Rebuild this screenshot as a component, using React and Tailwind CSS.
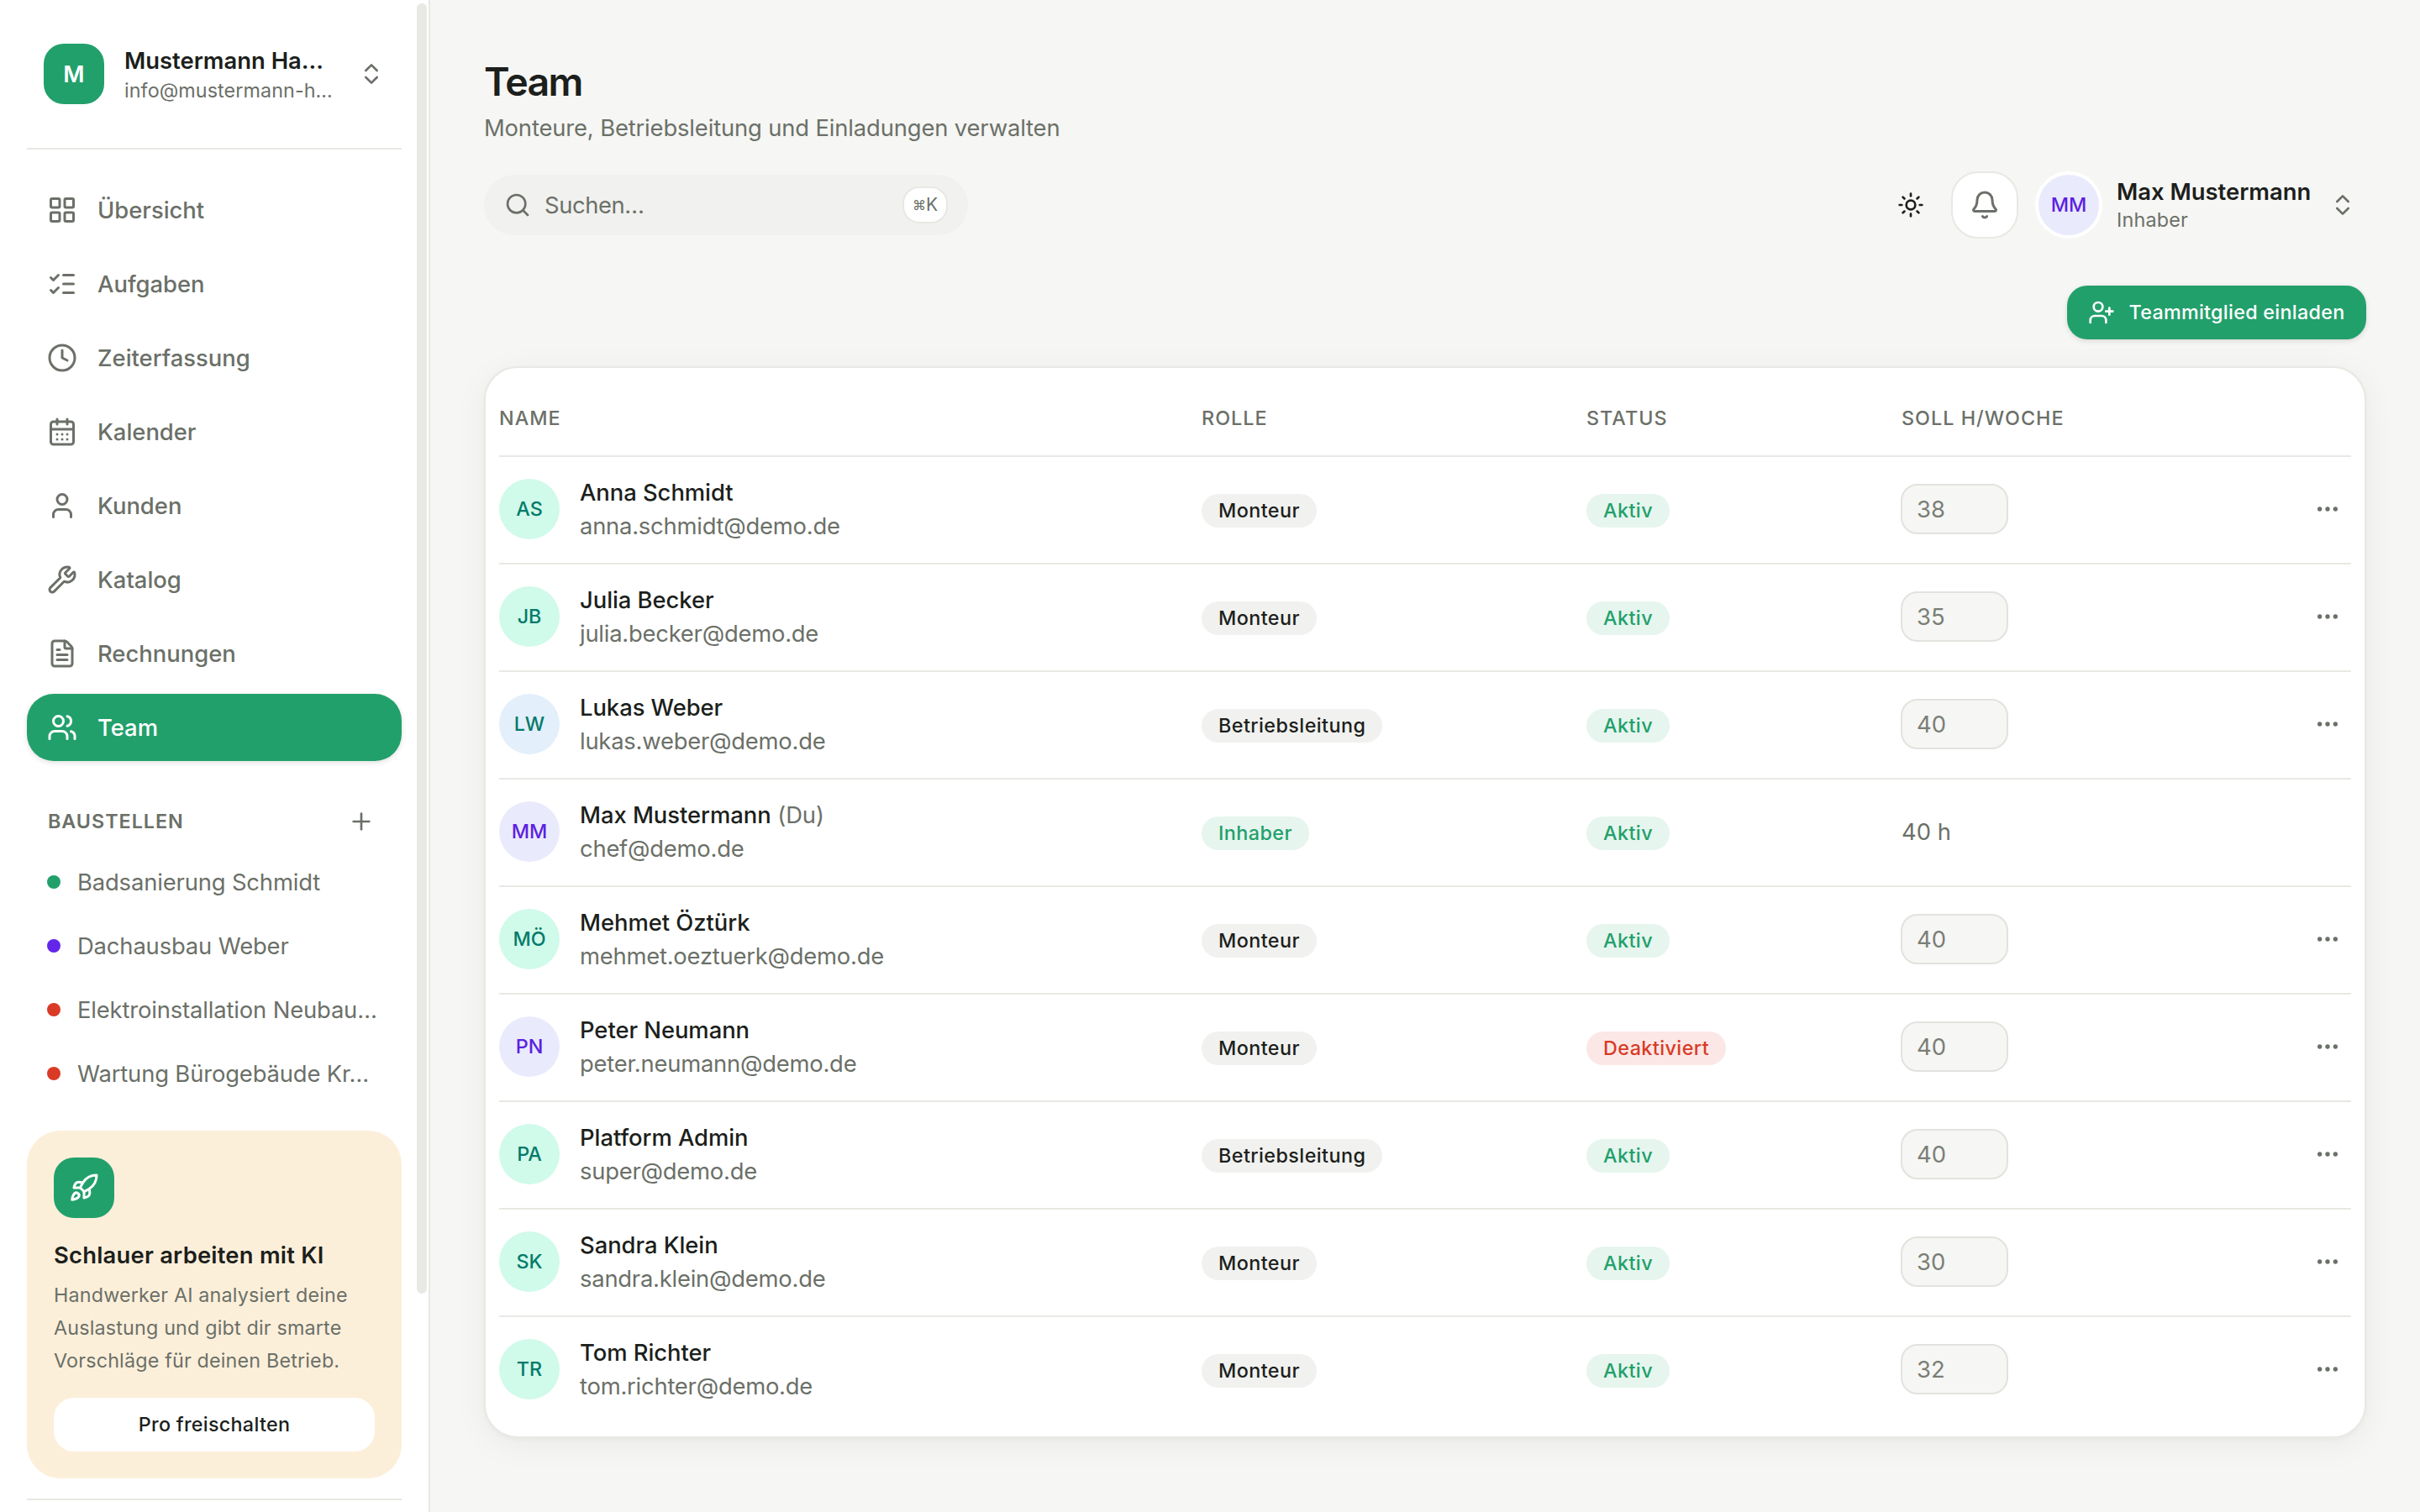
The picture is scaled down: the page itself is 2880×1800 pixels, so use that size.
import {
  Bell,
  CalendarDays,
  ChevronsUpDown,
  Clock,
  Ellipsis,
  FileText,
  LayoutGrid,
  ListChecks,
  Plus,
  Rocket,
  Search,
  Sun,
  User,
  UserPlus,
  Users,
  Wrench,
} from "lucide-react";
import clsx from "clsx";

const navItems = [
  { label: "Übersicht", icon: LayoutGrid },
  { label: "Aufgaben", icon: ListChecks },
  { label: "Zeiterfassung", icon: Clock },
  { label: "Kalender", icon: CalendarDays },
  { label: "Kunden", icon: User },
  { label: "Katalog", icon: Wrench },
  { label: "Rechnungen", icon: FileText },
  { label: "Team", icon: Users, active: true },
];

const sites = [
  { name: "Badsanierung Schmidt", dot: "bg-[#22a06b]" },
  { name: "Dachausbau Weber", dot: "bg-[#6425eb]" },
  { name: "Elektroinstallation Neubau…", dot: "bg-[#d93a26]" },
  { name: "Wartung Bürogebäude Kr…", dot: "bg-[#d93a26]" },
];

const mint = "bg-[#d0faea] text-[#047a6a]";
const sky = "bg-[#e3effa] text-[#047a6a]";
const violet = "bg-[#eaeafd] text-[#5b21e0]";

const members = [
  { initials: "AS", name: "Anna Schmidt", email: "anna.schmidt@demo.de", role: "Monteur", hours: 38, color: mint },
  { initials: "JB", name: "Julia Becker", email: "julia.becker@demo.de", role: "Monteur", hours: 35, color: mint },
  { initials: "LW", name: "Lukas Weber", email: "lukas.weber@demo.de", role: "Betriebsleitung", hours: 40, color: sky },
  { initials: "MM", name: "Max Mustermann", email: "chef@demo.de", role: "Inhaber", hours: 40, color: violet, self: true },
  { initials: "MÖ", name: "Mehmet Öztürk", email: "mehmet.oeztuerk@demo.de", role: "Monteur", hours: 40, color: mint },
  { initials: "PN", name: "Peter Neumann", email: "peter.neumann@demo.de", role: "Monteur", hours: 40, color: violet, disabled: true },
  { initials: "PA", name: "Platform Admin", email: "super@demo.de", role: "Betriebsleitung", hours: 40, color: mint },
  { initials: "SK", name: "Sandra Klein", email: "sandra.klein@demo.de", role: "Monteur", hours: 30, color: mint },
  { initials: "TR", name: "Tom Richter", email: "tom.richter@demo.de", role: "Monteur", hours: 32, color: mint },
];

function Badge({ className, children }) {
  return (
    <div className="flex pt-0.5">
      <span
        className={clsx(
          "flex h-10 items-center rounded-full px-5 text-[23.3px] leading-8 font-medium tracking-[0.45px]",
          className
        )}
      >
        {children}
      </span>
    </div>
  );
}

function Sidebar() {
  return (
    <aside className="flex w-[512px] shrink-0 overflow-hidden border-r-2 border-[#e8e8e4] bg-white">
      <div className="ml-8 flex w-[446px] shrink-0 flex-col">
        <div className="flex h-[178px] shrink-0 items-center border-b-2 border-[#e8e8e4] px-5">
          <div className="flex size-[72px] items-center justify-center rounded-[24px] bg-[#22a06b] text-[27.4px] leading-10 font-semibold text-white">
            M
          </div>
          <div className="ml-6 flex-1 whitespace-nowrap">
            <div className="text-[27.4px] leading-10 font-semibold text-[#1c1f1c]">Mustermann Ha…</div>
            <div className="text-[23.3px] leading-8 tracking-[0.1px]">info@mustermann-h…</div>
          </div>
          <ChevronsUpDown size={32} />
        </div>

        <nav className="mt-8 flex flex-col gap-2">
          {navItems.map(({ label, icon: Icon, active }) => (
            <a
              key={label}
              className={clsx(
                "flex h-20 items-center gap-6 rounded-[32px] px-6 text-[27.4px] leading-10 font-medium",
                active && "bg-[#22a06b] text-white shadow-[0_2px_6px_rgba(0,0,0,0.12)]"
              )}
            >
              <Icon size={36} />
              {label}
            </a>
          ))}
        </nav>

        <div className="mt-10 flex h-16 items-center justify-between pr-8 pl-[25px]">
          <span className="text-[23.3px] leading-8 font-semibold tracking-[1px]">BAUSTELLEN</span>
          <Plus size={32} />
        </div>
        <ul className="mt-1 flex flex-col gap-1">
          {sites.map((site) => (
            <li
              key={site.name}
              className="flex h-[72px] items-center gap-5 px-6 text-[27.4px] leading-10 tracking-[-0.15px] whitespace-nowrap"
            >
              <span className={clsx("size-4 shrink-0 rounded-full", site.dot)} />
              {site.name}
            </li>
          ))}
        </ul>

        {/* Pro-Hinweis */}
        <div className="mt-8 h-[414px] shrink-0 rounded-[40px] bg-[#fcefda] p-8">
          <div className="flex size-[72px] items-center justify-center rounded-[24px] bg-[#22a06b] text-white">
            <Rocket size={36} />
          </div>
          <h3 className="mt-6 text-[27.4px] leading-10 font-semibold tracking-[0.22px] text-[#1c1f1c]">
            Schlauer arbeiten mit KI
          </h3>
          <p className="mt-2 text-[23.3px] leading-[39px] tracking-[0.18px] whitespace-nowrap">
            Handwerker AI analysiert deine
            <br />
            Auslastung und gibt dir smarte
            <br />
            Vorschläge für deinen Betrieb.
          </p>
          <button className="mt-[25px] flex h-16 w-full items-center justify-center rounded-[24px] bg-white text-[23.3px] leading-8 font-medium tracking-[0.3px] text-[#1c1f1c]">
            Pro freischalten
          </button>
        </div>
        <div className="mt-6 h-0.5 shrink-0 bg-[#e8e8e4]" />
      </div>
      <div className="mt-1 ml-[18px] h-[1536px] w-3 shrink-0 rounded-full bg-[#e8e8e4]" />
    </aside>
  );
}

function Topbar() {
  return (
    <div className="mt-8 flex h-20 items-center justify-between">
      <div className="flex h-[72px] w-[576px] items-center rounded-[36px] bg-[#f1f1ef] px-6 text-[27.4px] leading-10">
        <Search size={32} />
        <span className="ml-4 flex-1 tracking-[-0.4px]">Suchen…</span>
        <kbd className="flex h-11 w-[54px] items-center justify-center rounded-[20px] border-2 border-[#e8e8e4] bg-white font-[Inter,'DejaVu_Sans',sans-serif] text-[21px]">
          <span className="text-[16px]">⌘</span>K
        </kbd>
      </div>
      <div className="flex items-center">
        <Sun size={32} className="text-[#1c1f1c]" />
        <button className="ml-8 flex size-20 items-center justify-center rounded-[32px] border-2 border-[#e8e8e4] bg-white">
          <Bell size={36} />
        </button>
        <div className="ml-5 flex size-20 items-center justify-center rounded-full border-4 border-white bg-[#eaeafd] text-[23.3px] leading-8 font-medium text-[#5b21e0]">
          MM
        </div>
        <div className="ml-[17px] w-[253px] whitespace-nowrap">
          <div className="text-[27.4px] leading-[35px] font-semibold text-[#1c1f1c]">Max Mustermann</div>
          <div className="text-[23.3px] leading-8 tracking-[0.2px]">Inhaber</div>
        </div>
        <ChevronsUpDown size={32} className="mr-3" />
      </div>
    </div>
  );
}

function TeamTable() {
  return (
    <div className="mt-8 rounded-[40px] border-2 border-[#e8e8e4] bg-white p-4 shadow-[0_8px_40px_rgba(0,0,0,0.05),0_2px_6px_rgba(0,0,0,0.03)]">
      <table className="w-full table-fixed border-separate border-spacing-0 text-left">
        <colgroup>
          <col className="w-[836px]" />
          <col className="w-[458px]" />
          <col className="w-[374px]" />
          <col />
          <col className="w-[120px]" />
        </colgroup>
        <thead>
          <tr className="text-[23.3px] leading-8 tracking-[1.05px] [&>th]:h-[90px] [&>th]:border-b-2 [&>th]:border-[#e8e8e4] [&>th]:font-medium">
            <th>NAME</th>
            <th>ROLLE</th>
            <th>STATUS</th>
            <th className="pl-px">SOLL H/WOCHE</th>
            <th />
          </tr>
        </thead>
        <tbody>
          {members.map((m) => (
            <tr
              key={m.email}
              className="[&>td]:h-32 [&>td]:border-b-2 [&>td]:border-[#e8e8e4] last:[&>td]:h-[126px] last:[&>td]:border-b-0"
            >
              <td>
                <div className="-mt-0.5 flex items-center gap-6">
                  <div
                    className={clsx(
                      "flex size-[72px] items-center justify-center rounded-full text-[23.3px] leading-8 font-medium",
                      m.color
                    )}
                  >
                    {m.initials}
                  </div>
                  <div className="text-[27.4px] leading-10">
                    <div className="font-medium tracking-[-0.05px] text-[#1c1f1c]">
                      {m.name}
                      {m.self && <span className="font-normal text-[#6b7068]"> (Du)</span>}
                    </div>
                    <div className="tracking-[-0.23px]">{m.email}</div>
                  </div>
                </div>
              </td>
              <td>
                <Badge className={m.self ? "bg-[#e6f5ee] text-[#22a06b]" : "bg-[#f1f1ef] text-[#1c1f1c]"}>{m.role}</Badge>
              </td>
              <td>
                <Badge className={m.disabled ? "bg-[#fbe7e6] text-[#d93a26]" : "bg-[#e6f5ee] text-[#22a06b]"}>
                  {m.disabled ? "Deaktiviert" : "Aktiv"}
                </Badge>
              </td>
              <td className="text-[27.4px] leading-10">
                {m.self ? (
                  <div className="-mt-0.5 pl-px">{m.hours} h</div>
                ) : (
                  <div className="-mt-0.5 flex h-[60px] w-32 items-center rounded-[20px] border-2 border-[#e2e2de] bg-[#f6f6f4] pl-[17px] text-[#7a7e77]">
                    {m.hours}
                  </div>
                )}
              </td>
              <td>{!m.self && <Ellipsis size={32} className="-mt-0.5 mr-3 ml-auto" />}</td>
            </tr>
          ))}
        </tbody>
      </table>
    </div>
  );
}

export default function App() {
  return (
    <div className="flex h-[1800px] w-[2880px] overflow-hidden bg-[#f6f6f4] font-[Inter,sans-serif] text-[#6b7068]">
      <Sidebar />
      <main className="flex-1 px-16 pt-16">
        <h1 className="text-[46.5px] leading-[66px] font-semibold tracking-[-1.7px] text-[#1c1f1c]">Team</h1>
        <p className="mt-0.5 text-[27.4px] leading-10 tracking-[-0.15px]">
          Monteure, Betriebsleitung und Einladungen verwalten
        </p>
        <Topbar />
        <div className="mt-14 flex justify-end">
          <button className="flex h-16 w-[356px] items-center justify-center gap-4 rounded-[24px] bg-[#22a06b] text-[23.3px] leading-8 font-medium tracking-[0.3px] whitespace-nowrap text-white shadow-[0_2px_6px_rgba(0,0,0,0.12)]">
            <UserPlus size={32} />
            Teammitglied einladen
          </button>
        </div>
        <TeamTable />
      </main>
    </div>
  );
}
